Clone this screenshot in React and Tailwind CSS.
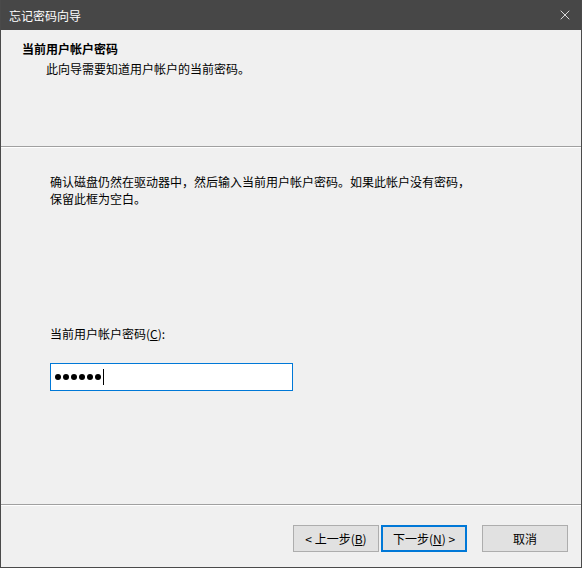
import { X } from 'lucide-react';

const font = { fontFamily: '"Noto Sans CJK SC", "Noto Sans", sans-serif' };

const Btn = ({ children, focused }) => (
  <button
    className={
      focused
        ? 'w-[86px] h-[27px] bg-[#e1e1e1] border-2 border-[#0078d7] text-[12px] text-black flex items-center justify-center'
        : 'w-[86px] h-[27px] bg-[#e1e1e1] border border-[#adadad] text-[12px] text-black flex items-center justify-center'
    }
  >
    {children}
  </button>
);

export default function App() {
  return (
    <div
      className="w-[582px] h-[568px] flex flex-col bg-[#f0f0f0] border-x border-b border-[#4a4a4a] text-[12px] text-black leading-[17px]"
      style={font}
    >
      {/* Title bar */}
      <div className="h-[30px] shrink-0 bg-[#474747] flex items-center justify-between pl-[8px] pr-[8px] text-white">
        <span className="text-[12px]">忘记密码向导</span>
        <X size={16} strokeWidth={1.2} className="text-white" />
      </div>

      {/* Header */}
      <div className="h-[116px] shrink-0 pl-[21px] pt-[10px]">
        <div className="font-bold">当前用户帐户密码</div>
        <div className="pl-[24px] pt-[3px]">此向导需要知道用户帐户的当前密码。</div>
      </div>
      <div className="h-px bg-[#a0a0a0]" />
      <div className="h-px bg-white" />

      {/* Body */}
      <div className="flex-1 pl-[49px] pt-[25px] flex flex-col">
        <p>确认磁盘仍然在驱动器中，然后输入当前用户帐户密码。如果此帐户没有密码，</p>
        <p>保留此框为空白。</p>
        <div className="mt-[118px]">
          当前用户帐户密码(<span className="underline">C</span>):
        </div>
        <div className="mt-[21px] w-[243px] h-[28px] bg-white border border-[#0078d7] flex items-center pl-[4px]">
          <div className="flex gap-[2px]">
            {[0, 1, 2, 3, 4, 5].map((i) => (
              <span key={i} className="w-[6px] h-[6px] rounded-full bg-black" />
            ))}
          </div>
          <span className="w-px h-[16px] bg-black ml-[2px]" />
        </div>
      </div>

      <div className="h-px bg-[#a0a0a0]" />
      <div className="h-px bg-white" />

      {/* Footer */}
      <div className="h-[61px] shrink-0 flex items-start justify-end pt-[19px] pr-[13px]">
        <Btn>
          &lt; 上一步(<span className="underline">B</span>)
        </Btn>
        <div className="w-[2px]" />
        <Btn focused>
          下一步(<span className="underline">N</span>) &gt;
        </Btn>
        <div className="w-[15px]" />
        <Btn>取消</Btn>
      </div>
    </div>
  );
}
